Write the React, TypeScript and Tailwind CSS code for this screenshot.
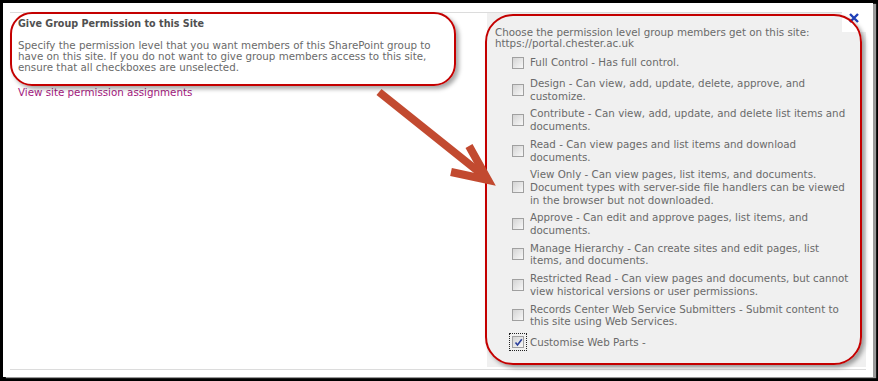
import React from "react";

const items: { lines: string[]; checked?: boolean }[] = [
  { lines: ["Full Control - Has full control."] },
  { lines: ["Design - Can view, add, update, delete, approve, and", "customize."] },
  { lines: ["Contribute - Can view, add, update, and delete list items and", "documents."] },
  { lines: ["Read - Can view pages and list items and download", "documents."] },
  {
    lines: [
      "View Only - Can view pages, list items, and documents.",
      "Document types with server-side file handlers can be viewed",
      "in the browser but not downloaded.",
    ],
  },
  { lines: ["Approve - Can edit and approve pages, list items, and", "documents."] },
  { lines: ["Manage Hierarchy - Can create sites and edit pages, list", "items, and documents."] },
  { lines: ["Restricted Read - Can view pages and documents, but cannot", "view historical versions or user permissions."] },
  { lines: ["Records Center Web Service Submitters - Submit content to", "this site using Web Services."] },
  { lines: ["Customise Web Parts -"], checked: true },
];

function Checkbox({ checked }: { checked?: boolean }) {
  const box = (
    <div className="w-[12px] h-[12px] border border-[#a0a0a0] bg-gradient-to-br from-[#d4d4d4] to-[#f8f8f8] flex items-center justify-center">
      {checked && (
        <svg width="9" height="9" viewBox="0 0 9 9">
          <path d="M1.5 4.5 L3.5 7 L7.8 1.2" fill="none" stroke="#2b3f9c" strokeWidth="1.6" />
        </svg>
      )}
    </div>
  );
  if (checked) {
    return <div className="p-[2px] border border-dotted border-[#222] -m-[3px]">{box}</div>;
  }
  return box;
}

export default function App() {
  return (
    <div
      className="relative w-[878px] h-[381px] bg-black pl-[3px] pt-[3px] overflow-hidden"
      style={{ fontFamily: '"DejaVu Sans", Verdana, sans-serif' }}
    >
      <div className="w-[870px] h-[374px] bg-white shadow-[3px_1px_1px_#9a9a9a] pl-[7px] pt-[9px]">
        <div className="relative w-[856px] h-[358px] border-t border-b border-[#dcdcdc] flex">
          <div className="w-[477px] pl-[8px] pt-[5px] text-[10.3px] text-[#6a6a6a]">
            <div className="font-bold text-[#505050] text-[9.6px] leading-[12px]">Give Group Permission to this Site</div>
            <div className="mt-[10px] leading-[10.8px]">
              Specify the permission level that you want members of this SharePoint group to
              <br />
              have on this site. If you do not want to give group members access to this site,
              <br />
              ensure that all checkboxes are unselected.
            </div>
            <div className="mt-[15px] leading-[11px] text-[#a3187e]">View site permission assignments</div>
          </div>
          <div className="w-[379px] h-[354px] bg-[#f0f0f0] pl-[8px] pt-[14px] text-[10.3px] text-[#6a6a6a]">
            <div className="leading-[11px] whitespace-nowrap">
              Choose the permission level group members get on this site:
              <br />
              https://portal.chester.ac.uk
            </div>
            <div className="mt-[4px] ml-[17px] flex flex-col gap-[5px]">
              {items.map((it, i) => (
                <div key={i} className="flex items-center gap-[6px] min-h-[19px]">
                  <Checkbox checked={it.checked} />
                  <div className="leading-[12.7px] whitespace-nowrap">
                    {it.lines.map((l, j) => (
                      <div key={j}>{l}</div>
                    ))}
                  </div>
                </div>
              ))}
            </div>
          </div>
          <div className="absolute right-0 -top-[10px] w-[24px] h-[29px] bg-white flex justify-center pt-[10px]">
            <svg width="10" height="10" viewBox="0 0 10 10">
              <path d="M1 1 L9 9 M9 1 L1 9" stroke="#1e3fb8" strokeWidth="2.4" />
            </svg>
          </div>
        </div>
      </div>

      {/* annotation: left rounded box */}
      <div className="absolute left-[10px] top-[12px] w-[446px] h-[74px] rounded-[22px] border-2 border-[#c40000] shadow-[3px_3px_4px_rgba(0,0,0,0.35)]" />
      {/* annotation: right rounded box */}
      <div className="absolute left-[485px] top-[14px] w-[377px] h-[351px] rounded-[28px] border-2 border-[#c40000] shadow-[3px_3px_4px_rgba(0,0,0,0.35)]" />
      {/* annotation: arrow */}
      <svg className="absolute left-0 top-0" width="878" height="381" viewBox="0 0 878 381">
        <line x1="379" y1="92" x2="484" y2="176" stroke="#c24a30" strokeWidth="8" />
        <polyline points="469,146 488,180 451,172" fill="none" stroke="#c24a30" strokeWidth="8" strokeLinejoin="miter" />
      </svg>
    </div>
  );
}
